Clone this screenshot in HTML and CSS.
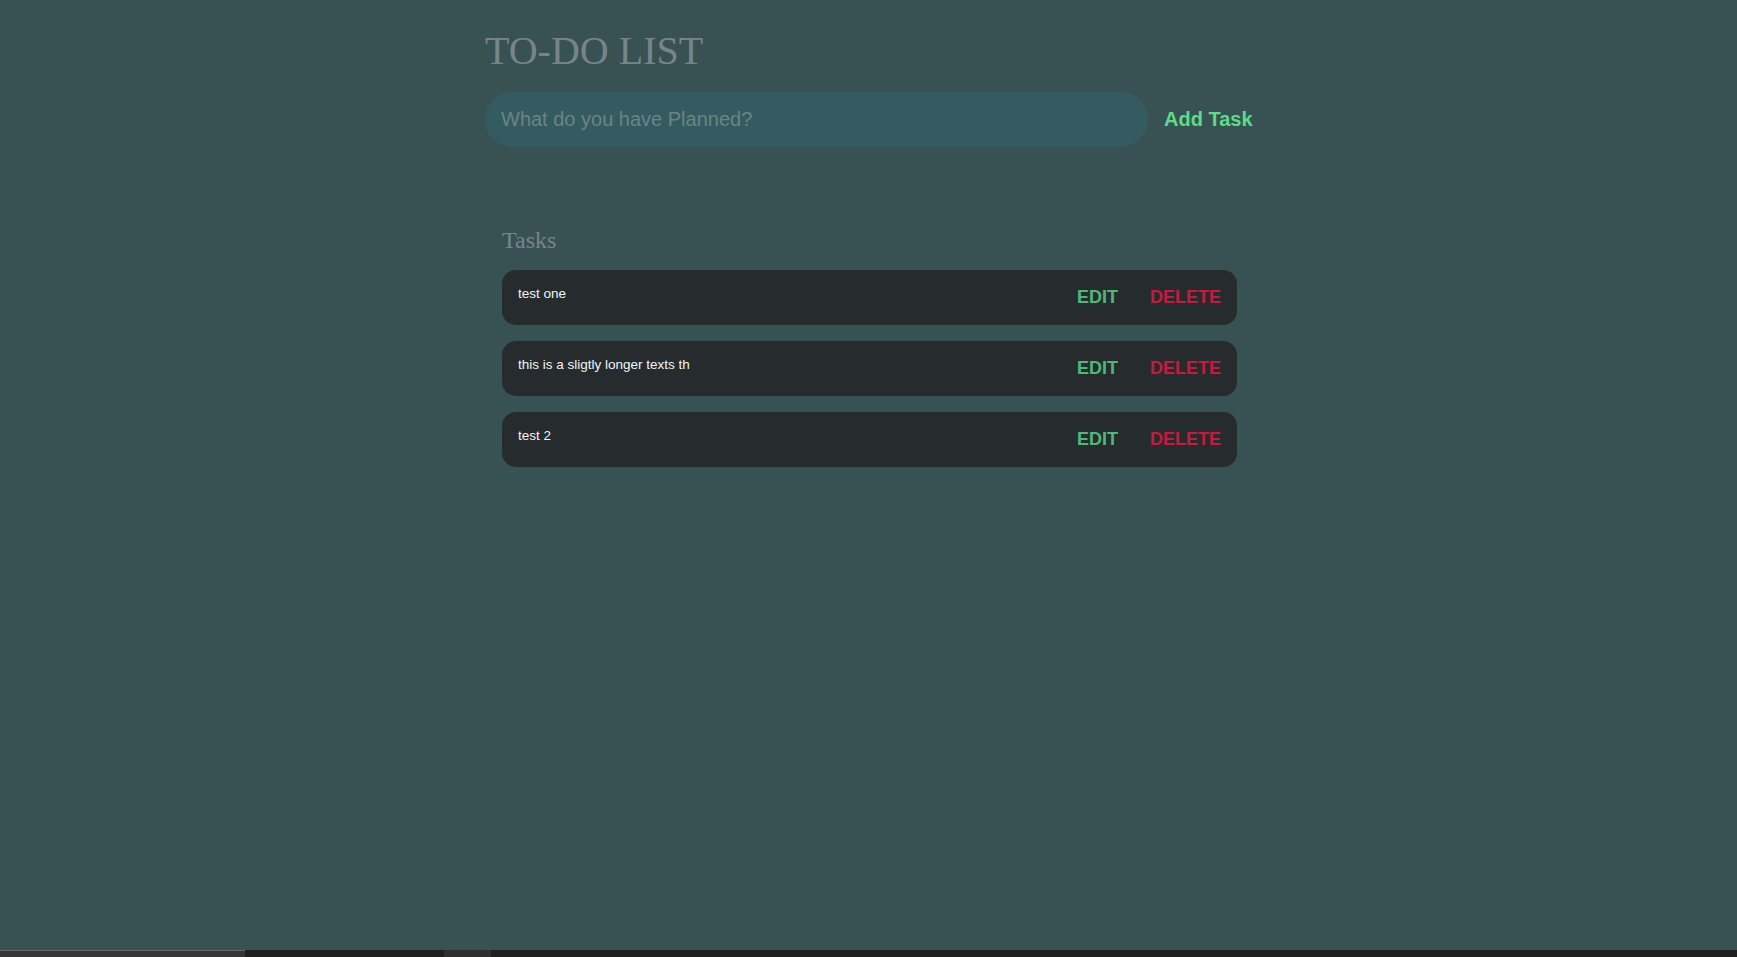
FILE: index.html
```html
<!DOCTYPE html>
<html lang="en">
<head>
<meta charset="utf-8">
<title>To-Do List</title>
<link rel="stylesheet" href="styles.css">
</head>
<body>
<main class="app">
  <h1 class="title">TO-DO LIST</h1>
  <form class="new-task">
    <input class="new-task-input" type="text" placeholder="What do you have Planned?">
    <button class="add-btn" type="button">Add Task</button>
  </form>
  <section class="tasks">
    <h2 class="tasks-title">Tasks</h2>
    <div class="task-list">
      <div class="task">
        <div class="task-text">test one</div>
        <div class="actions">
          <button class="edit" type="button">EDIT</button>
          <button class="delete" type="button">DELETE</button>
        </div>
      </div>
      <div class="task">
        <div class="task-text">this is a sligtly longer texts th</div>
        <div class="actions">
          <button class="edit" type="button">EDIT</button>
          <button class="delete" type="button">DELETE</button>
        </div>
      </div>
      <div class="task">
        <div class="task-text">test 2</div>
        <div class="actions">
          <button class="edit" type="button">EDIT</button>
          <button class="delete" type="button">DELETE</button>
        </div>
      </div>
    </div>
  </section>
</main>
<footer class="taskbar">
  <div class="tb-start"></div>
  <div class="tb-gap"></div>
  <div class="tb-item"></div>
  <div class="tb-rest"></div>
</footer>
</body>
</html>
```

FILE: styles.css
```css
html, body {
  margin: 0;
  padding: 0;
  height: 100%;
}

body {
  background: #385254;
  display: flex;
  flex-direction: column;
  min-height: 100vh;
  font-family: "Liberation Sans", Arial, sans-serif;
}

.app {
  width: 768px;
  margin: 0 auto;
  padding: 28px 0 0 1px;
  flex: 1;
}

.title {
  margin: 0;
  font-family: "Liberation Serif", "Times New Roman", serif;
  font-weight: normal;
  font-size: 40px;
  line-height: 46px;
  color: #778589;
}

.new-task {
  display: flex;
  align-items: center;
  gap: 16px;
  margin: 18px 0 0;
}

.new-task-input {
  width: 663px;
  height: 55px;
  box-sizing: border-box;
  border: none;
  outline: none;
  border-radius: 28px;
  background: #345b60;
  padding: 0 16px;
  font-family: "Liberation Sans", Arial, sans-serif;
  font-size: 20px;
  color: #dfe6e8;
}

.new-task-input::placeholder {
  color: #6c8387;
}

.add-btn {
  background: none;
  border: none;
  padding: 0;
  font-family: "Liberation Sans", Arial, sans-serif;
  font-weight: bold;
  font-size: 20px;
  color: #5cdc88;
  cursor: pointer;
}

.tasks {
  padding: 0 16px 0 17px;
  margin-top: 79px;
}

.tasks-title {
  margin: 0 0 16px;
  font-family: "Liberation Serif", "Times New Roman", serif;
  font-weight: normal;
  font-size: 24px;
  line-height: 28px;
  color: #778589;
}

.task-list {
  display: flex;
  flex-direction: column;
  gap: 16px;
}

.task {
  display: flex;
  justify-content: space-between;
  align-items: flex-start;
  background: #262c2d;
  border-radius: 14px;
  padding: 16px;
}

.task-text {
  color: #f2f4f4;
  font-size: 13.5px;
  line-height: 16px;
}

.actions {
  display: flex;
  gap: 32px;
  align-self: center;
}

.actions button {
  background: none;
  border: none;
  padding: 0;
  font-family: "Liberation Sans", Arial, sans-serif;
  font-weight: bold;
  font-size: 18px;
  line-height: 23px;
  cursor: pointer;
}

.edit {
  color: #4db878;
}

.delete {
  color: #c8193f;
}

.taskbar {
  display: flex;
  height: 7px;
  background: #1f2020;
}

.tb-start {
  width: 245px;
  background: #363636;
  border-top: 1px solid #6a6a6a;
  box-sizing: border-box;
}

.tb-gap {
  width: 199px;
}

.tb-item {
  width: 47px;
  background: #2e2f2f;
}

.tb-rest {
  flex: 1;
}
```
